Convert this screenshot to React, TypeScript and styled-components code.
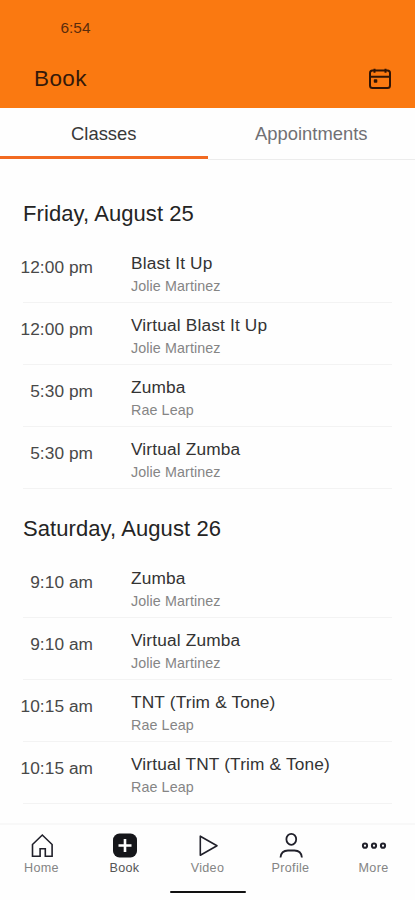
import React from "react";
import styled, { createGlobalStyle } from "styled-components";

const GlobalStyle = createGlobalStyle`
  * { box-sizing: border-box; }
  body { margin: 0; background: #fefefe; }
`;

const Screen = styled.div`
  display: flex;
  flex-direction: column;
  width: 415px;
  height: 900px;
  overflow: hidden;
  background: #fefefe;
  color: #242424;
  font-family: "Liberation Sans", Arial, sans-serif;
  white-space: nowrap;
`;

const Header = styled.header`
  height: 108px;
  flex: none;
  background: #fa7911;
  color: #35190a;
`;

const StatusBar = styled.div`
  height: 56px;
  padding: 18px 0 0 60.500px;
  font-size: 15.4px;
  line-height: 20px;
  color: #5a2c0c;
`;

const TitleBar = styled.div`
  display: flex;
  align-items: center;
  justify-content: space-between;
  height: 46px;
  padding: 0 23px 0 34px;
`;

const Title = styled.h1`
  margin: 0;
  font-size: 22.5px;
  font-weight: 400;
  letter-spacing: 0.4px;
`;

const Tabs = styled.nav`
  display: flex;
  flex: none;
  height: 52px;
`;

const Tab = styled.div<{ $active?: boolean }>`
  flex: 1;
  height: ${(p) => (p.$active ? 51 : 52)}px;
  padding-top: 16px;
  text-align: center;
  font-size: 18.4px;
  line-height: 20px;
  color: ${(p) => (p.$active ? "#383838" : "#707074")};
  border-bottom: ${(p) => (p.$active ? "3px solid #f26a21" : "1px solid #ececec")};
`;

const Schedule = styled.main`
  flex: none;
  height: 663px;
  padding: 27px 23px 0;
`;

const Day = styled.section`
  margin-bottom: 13px;
`;

const DayTitle = styled.h2`
  height: 54px;
  margin: 0;
  font-size: 22px;
  font-weight: 400;
  line-height: 54px;
  letter-spacing: 0.08px;
`;

const ClassRow = styled.div`
  display: flex;
  height: 62px;
  border-bottom: 1px solid #f3f3f3;
`;

const Time = styled.div`
  width: 73px;
  margin: 15px 35px 0 -3px;
  text-align: right;
  font-size: 17.3px;
  line-height: 22px;
  letter-spacing: 0.05px;
  color: #484848;
`;

const ClassName = styled.div`
  padding-top: 11px;
  padding-left: 3px;
  font-size: 17.3px;
  line-height: 22px;
  letter-spacing: 0.16px;
  color: #333;
`;

const Teacher = styled.div`
  padding: 3px 0 0 3px;
  font-size: 14.3px;
  line-height: 19px;
  letter-spacing: 0.1px;
  color: #858585;
`;

const BottomNav = styled.nav`
  display: flex;
  flex: none;
  height: 68px;
  border-top: 2px solid #f8f8f8;
`;

const NavItem = styled.div<{ $active?: boolean }>`
  display: flex;
  flex: 1;
  flex-direction: column;
  align-items: center;
  padding-top: 7px;
  font-size: 12.6px;
  line-height: 16px;
  letter-spacing: 0.3px;
  color: ${(p) => (p.$active ? "#555" : "#848484")};
`;

const NavIcon = styled.svg`
  width: 28px;
  height: 28px;
  fill: none;
  stroke: #20202a;
  stroke-width: 1.6;
`;

const HomeBar = styled.div`
  width: 76px;
  height: 2px;
  margin: 0 auto;
  border-radius: 1px;
  background: #111;
`;

const days = [
  {
    title: "Friday, August 25",
    classes: [
      ["12:00 pm", "Blast It Up", "Jolie Martinez"],
      ["12:00 pm", "Virtual Blast It Up", "Jolie Martinez"],
      ["5:30 pm", "Zumba", "Rae Leap"],
      ["5:30 pm", "Virtual Zumba", "Jolie Martinez"],
    ],
  },
  {
    title: "Saturday, August 26",
    classes: [
      ["9:10 am", "Zumba", "Jolie Martinez"],
      ["9:10 am", "Virtual Zumba", "Jolie Martinez"],
      ["10:15 am", "TNT (Trim & Tone)", "Rae Leap"],
      ["10:15 am", "Virtual TNT (Trim & Tone)", "Rae Leap"],
    ],
  },
];

const navItems = [
  {
    label: "Home",
    icon: <path d="M4.5 12.500 14.300 3l9.800 9.500V24.200h-6.800v-7.400h-5.200v7.400H4.500z" />,
  },
  {
    label: "Book",
    icon: (
      <>
        <rect x="2" y="1.500" width="24" height="24" rx="6.500" fill="#15161a" stroke="none" />
        <path d="M14 7v13M7.500 13.500h13" stroke="#fff" strokeWidth="2.600" />
      </>
    ),
  },
  {
    label: "Video",
    icon: <path d="M6.300 4.200v19L23 13.700z" strokeLinejoin="round" />,
  },
  {
    label: "Profile",
    icon: (
      <>
        <ellipse cx="14.300" cy="7.300" rx="4.900" ry="5.500" strokeWidth="1.800" />
        <path d="M3.500 25.500c.4-4.500 3.300-7 7.500-7h6.400c4.200 0 7.100 2.500 7.500 7" strokeWidth="1.800" />
      </>
    ),
  },
  {
    label: "More",
    icon: (
      <>
        <circle cx="5" cy="13.700" r="2.100" strokeWidth="2" />
        <circle cx="14" cy="13.700" r="2.100" strokeWidth="2" />
        <circle cx="23" cy="13.700" r="2.100" strokeWidth="2" />
      </>
    ),
  },
];

export default function App() {
  return (
    <Screen>
      <GlobalStyle />
      <Header>
        <StatusBar>6:54</StatusBar>
        <TitleBar>
          <Title>Book</Title>
          <svg width="24" height="22" viewBox="0 0 24 22" fill="none" stroke="#301405" strokeWidth="2">
            <rect x="2" y="2.500" width="20" height="17.500" rx="2.500" />
            <path d="M2 8.800h20M6.500 .8v4M17.500 .8v4" />
            <rect x="5.800" y="11.300" width="3.500" height="3.500" rx="0.800" fill="#301405" stroke="none" />
          </svg>
        </TitleBar>
      </Header>
      <Tabs>
        <Tab $active>Classes</Tab>
        <Tab>Appointments</Tab>
      </Tabs>
      <Schedule>
        {days.map((day) => (
          <Day key={day.title}>
            <DayTitle>{day.title}</DayTitle>
            {day.classes.map(([time, name, teacher]) => (
              <ClassRow key={time + name}>
                <Time>{time}</Time>
                <div>
                  <ClassName>{name}</ClassName>
                  <Teacher>{teacher}</Teacher>
                </div>
              </ClassRow>
            ))}
          </Day>
        ))}
      </Schedule>
      <BottomNav>
        {navItems.map((item) => (
          <NavItem key={item.label} $active={item.label === "Book"}>
            <NavIcon viewBox="0 0 28 28">{item.icon}</NavIcon>
            {item.label}
          </NavItem>
        ))}
      </BottomNav>
      <HomeBar />
    </Screen>
  );
}
